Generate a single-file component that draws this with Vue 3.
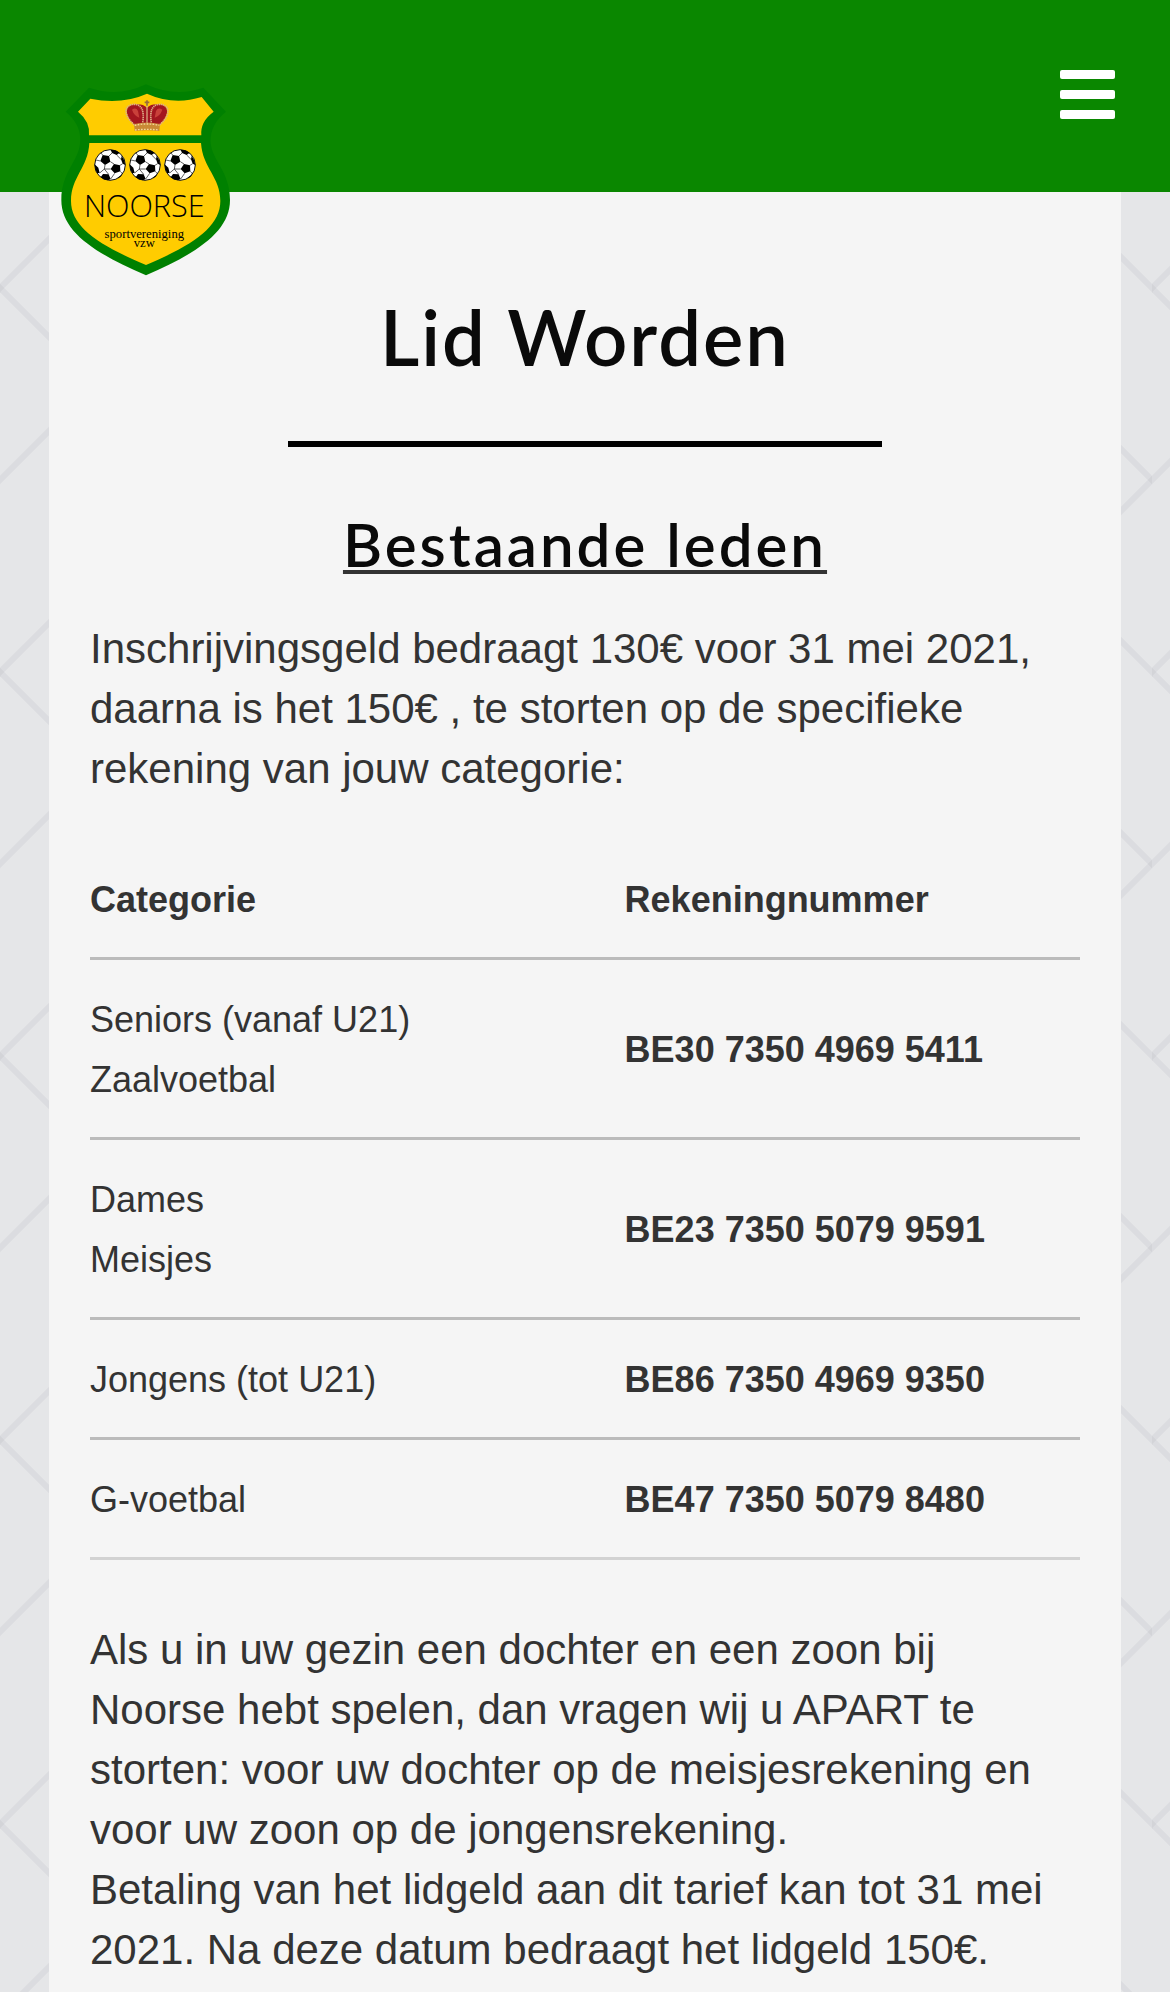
<script setup>
const accounts = [
  { groups: ['Seniors (vanaf U21)', 'Zaalvoetbal'], number: 'BE30 7350 4969 5411' },
  { groups: ['Dames', 'Meisjes'], number: 'BE23 7350 5079 9591' },
  { groups: ['Jongens (tot U21)'], number: 'BE86 7350 4969 9350' },
  { groups: ['G-voetbal'], number: 'BE47 7350 5079 8480' },
]
const balls = [180, 285, 390]
</script>

<template>
  <div class="page">
    <header class="bar">
      <a class="logo" href="#" aria-label="Noorse sportvereniging vzw">
        <svg viewBox="0 0 570 630" width="190" height="210">
          <path
            fill="#008000"
            d="M117 38Q205 68 288 28Q375 68 460 38L528 110Q478 150 482 205C488 260 540 290 540 375C540 470 440 535 288 601C135 535 34 470 34 375C34 290 86 260 90 205Q96 150 47 110Z"
          />
          <path fill="#fc0" d="M121 71Q215 90 291 56Q370 92 455 66L491 110Q450 140 454 181H117Q121 140 84 110Z" />
          <path
            fill="#fc0"
            d="M118 204H453C458 280 511 305 511 378C511 455 430 510 288 570C145 510 63 455 63 378C63 305 114 280 118 204Z"
          />
          <g>
            <path fill="#a3161f" d="M253 149C225 125 220 88 258 88Q278 86 291 98Q304 86 324 88C362 88 357 125 329 149Q291 140 253 149Z" />
            <path fill="#c9403a" d="M246 104Q258 96 264 108L268 128Q252 122 246 104ZM318 108Q324 96 337 104Q331 122 314 128Z" />
            <path fill="none" stroke="#dcae86" stroke-width="5" stroke-dasharray="4 2" d="M253 149C217 120 222 86 256 88Q286 92 278 143M329 149C365 120 360 86 326 88Q296 92 304 143M291 88V146" />
            <path fill="#c98a35" d="M252 147Q291 138 330 147L328 168Q291 164 254 168Z" />
            <path fill="none" stroke="#f3d79b" stroke-width="4" stroke-dasharray="5 4" d="M254 151Q291 143 328 151M255 165Q291 161 327 165" />
            <path stroke="#9a6a3c" stroke-width="5" d="M291 76V92M284 82H298" />
          </g>
          <g v-for="x in balls" :key="x" :transform="`translate(${x} 270)`">
            <circle r="46" fill="#fff" stroke="#111" stroke-width="3" />
            <path
              fill="#000"
              d="M-22 -30L-3 -27L1 -10L-15 0L-29 -12ZM12 -3L30 1L31 19L14 25L2 12ZM2 -46Q18 -46 29 -37L20 -30L6 -36ZM35 -27Q45 -15 46 0L38 -4L33 -17ZM-46 -2L-35 8L-31 24L-39 24Q-46 12 -46 -2ZM-21 27L-4 28L2 42L-6 46Q-20 44 -28 37ZM27 36L38 27L32 35L22 42Z"
            />
            <path
              fill="none"
              stroke="#111"
              stroke-width="2"
              d="M-22 -30L-28 -37M-3 -27L6 -36M1 -10L12 -3M-15 0L-17 12L-31 24M-29 -12L-42 -15M-17 12L-4 28M2 12L-17 12M30 1L38 -4M31 19L38 27M14 25L2 42M20 -30L33 -17"
            />
          </g>
          <text class="club" x="283" y="425">NOORSE</text>
          <text class="sub" y="488">
            <tspan x="283">sportvereniging</tspan>
            <tspan x="283" dy="28">vzw</tspan>
          </text>
        </svg>
      </a>
      <button class="menu" type="button" aria-label="Menu">
        <svg viewBox="0 0 55 50" width="55" height="50" fill="#fff">
          <rect width="55" height="9" y="1" rx="2" />
          <rect width="55" height="9" y="21" rx="2" />
          <rect width="55" height="9" y="41" rx="2" />
        </svg>
      </button>
    </header>

    <main class="content">
      <h1>Lid Worden</h1>
      <hr />
      <h2>Bestaande leden</h2>
      <p>
        Inschrijvingsgeld bedraagt 130€ voor 31 mei 2021, daarna is het 150€ , te storten op de specifieke rekening van
        jouw categorie:
      </p>
      <table>
        <thead>
          <tr>
            <th scope="col">Categorie</th>
            <th scope="col">Rekeningnummer</th>
          </tr>
        </thead>
        <tbody>
          <tr v-for="account in accounts" :key="account.number">
            <td>
              <div v-for="group in account.groups" :key="group">{{ group }}</div>
            </td>
            <td class="number">{{ account.number }}</td>
          </tr>
        </tbody>
      </table>
      <p>
        Als u in uw gezin een dochter en een zoon bij Noorse hebt spelen, dan vragen wij u APART te storten: voor uw
        dochter op de meisjesrekening en voor uw zoon op de jongensrekening.<br />
        Betaling van het lidgeld aan dit tarief kan tot 31 mei 2021. Na deze datum bedraagt het lidgeld 150€.
      </p>
    </main>
  </div>
</template>

<style>
body {
  margin: 0;
}
</style>

<style scoped>
.page {
  display: flex;
  flex-direction: column;
  min-height: 100vh;
  background: #e5e6e8
    url("data:image/svg+xml,%3Csvg xmlns='http://www.w3.org/2000/svg' width='384' height='384'%3E%3Cg fill='none' stroke='%23b4b6c0' stroke-opacity='.2' stroke-width='6'%3E%3Cpath d='M-10 278L394 682'/%3E%3Cpath d='M-10 -106L394 298'/%3E%3Cpath d='M-10 490L394 86'/%3E%3Cpath d='M-10 106L106 -10'/%3E%3Cpath d='M-10 298L96 192'/%3E%3Cpath d='M288 0L394 106'/%3E%3C/g%3E%3C/svg%3E");
  color: #333;
  font-family: "Liberation Sans", Arial, sans-serif;
}
.bar {
  position: relative;
  display: flex;
  align-items: center;
  justify-content: flex-end;
  box-sizing: border-box;
  height: 192px;
  padding: 0 55px 4px;
  background: #0a8700;
}
.logo {
  position: absolute;
  top: 75px;
  left: 50px;
}
.logo svg,
.menu svg {
  display: block;
}
.club {
  font-family: "Open Sans", "Noto Sans", sans-serif;
  font-size: 92px;
  font-weight: 300;
  text-anchor: middle;
}
.sub {
  font-family: "Liberation Serif", serif;
  font-size: 38px;
  text-anchor: middle;
}
.menu {
  padding: 0;
  border: 0;
  background: none;
  cursor: pointer;
}
.content {
  flex: 1;
  margin: 0 49px;
  padding: 91px 41px 12px;
  background: #f5f5f5;
}
h1,
h2 {
  margin: 0;
  color: #0a0a0a;
  font-family: Lato, sans-serif;
  font-weight: 600;
  text-align: center;
}
h1 {
  font-size: 76px;
  line-height: 108px;
  letter-spacing: 2px;
}
h2 {
  margin-bottom: 33px;
  font-size: 60px;
  line-height: 84px;
  letter-spacing: 3px;
  text-decoration: underline 4px #333;
  text-underline-offset: 3px;
}
hr {
  width: 60%;
  height: 6px;
  margin: 50px auto 55px;
  border: 0;
  background: #000;
}
p {
  margin: 0;
  font-size: 42px;
  line-height: 60px;
}
table {
  width: 100%;
  margin: 41px 0 60px;
  border-spacing: 0;
  font-size: 36px;
  line-height: 60px;
  text-align: left;
}
th,
td {
  padding: 30px 0 27px;
  border-bottom: 3px solid #bbb;
}
th:first-child {
  width: 54%;
}
tbody tr:last-child td {
  border-bottom-color: #d2d2d2;
}
.number {
  font-weight: 700;
}
</style>
